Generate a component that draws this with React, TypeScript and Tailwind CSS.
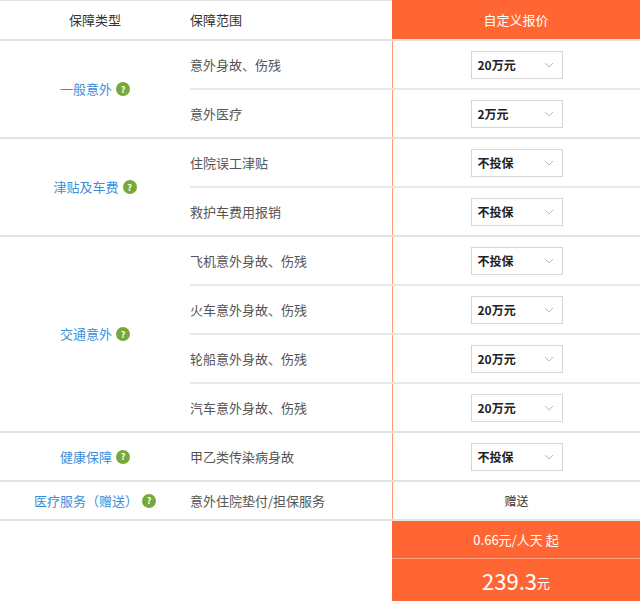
import React from "react";

const groups = [
  { name: "一般意外", rows: [["意外身故、伤残", "20万元"], ["意外医疗", "2万元"]] },
  { name: "津贴及车费", rows: [["住院误工津贴", "不投保"], ["救护车费用报销", "不投保"]] },
  { name: "交通意外", rows: [["飞机意外身故、伤残", "不投保"], ["火车意外身故、伤残", "20万元"], ["轮船意外身故、伤残", "20万元"], ["汽车意外身故、伤残", "20万元"]] },
  { name: "健康保障", rows: [["甲乙类传染病身故", "不投保"]] },
];

const Help = () => (
  <span className="ml-1 inline-flex h-[14px] w-[14px] items-center justify-center rounded-full bg-[#76a83a] text-[9px] font-bold leading-none text-white">?</span>
);

const Sel = ({ v }: { v: string }) => (
  <div className="flex h-[28px] w-[92px] items-center justify-between border border-[#d6d6d6] bg-white pl-[6px] pr-[8px] text-[12px] font-semibold text-[#222]">
    <span>{v}</span>
    <svg width="10" height="6" viewBox="0 0 10 6"><path d="M1 1l4 4 4-4" fill="none" stroke="#bbb" strokeWidth="1" /></svg>
  </div>
);

export default function App() {
  return (
    <div className="h-[601px] w-[640px] bg-white text-[13px]" style={{ fontFamily: '"Noto Sans CJK SC", "Noto Sans", sans-serif' }}>
      <div className="flex h-[41px] border-b-2 border-[#e3e3e3]">
        <div className="flex flex-1 border-t border-[#e3e3e3]">
          <div className="flex w-[190px] items-center justify-center text-[#333]">保障类型</div>
          <div className="flex flex-1 items-center pl-[0px] text-[#333]">保障范围</div>
        </div>
        <div className="flex w-[248px] items-center justify-center bg-[#ff6633] text-white">自定义报价</div>
      </div>
      {groups.map((g) => (
        <div key={g.name} className="flex border-b-2 border-[#e3e3e3]">
          <div className="flex w-[190px] items-center justify-center text-[#3a8fd8]">{g.name}<Help /></div>
          <div className="flex-1">
            {g.rows.map((r, i) => (
              <div key={r[0]} className={`flex h-[47px] ${i < g.rows.length - 1 ? "border-b-2 border-[#e8e8e8] h-[49px]" : ""}`}>
                <div className="flex flex-1 items-center text-[#555]">{r[0]}</div>
                <div className="flex w-[248px] items-center justify-center border-l border-[#ff9a75]"><Sel v={r[1]} /></div>
              </div>
            ))}
          </div>
        </div>
      ))}
      <div className="flex h-[39px] border-b-2 border-[#e3e3e3]">
        <div className="flex w-[190px] items-center justify-center text-[#3a8fd8]">医疗服务（赠送）<Help /></div>
        <div className="flex flex-1 items-center text-[#555]">意外住院垫付/担保服务</div>
        <div className="flex w-[248px] items-center justify-center border-l border-[#ff9a75] text-[12px] text-[#333]">赠送</div>
      </div>
      <div className="flex justify-end">
        <div className="w-[248px] bg-[#ff6633] text-white">
          <div className="flex h-[38px] items-center justify-center border-b border-[#ffa27f] text-[13px]">0.66元/人天 起</div>
          <div className="flex h-[42px] items-center justify-center"><span className="text-[22px]">239.3</span><span className="mt-[6px] text-[13px]">元</span></div>
        </div>
      </div>
    </div>
  );
}
